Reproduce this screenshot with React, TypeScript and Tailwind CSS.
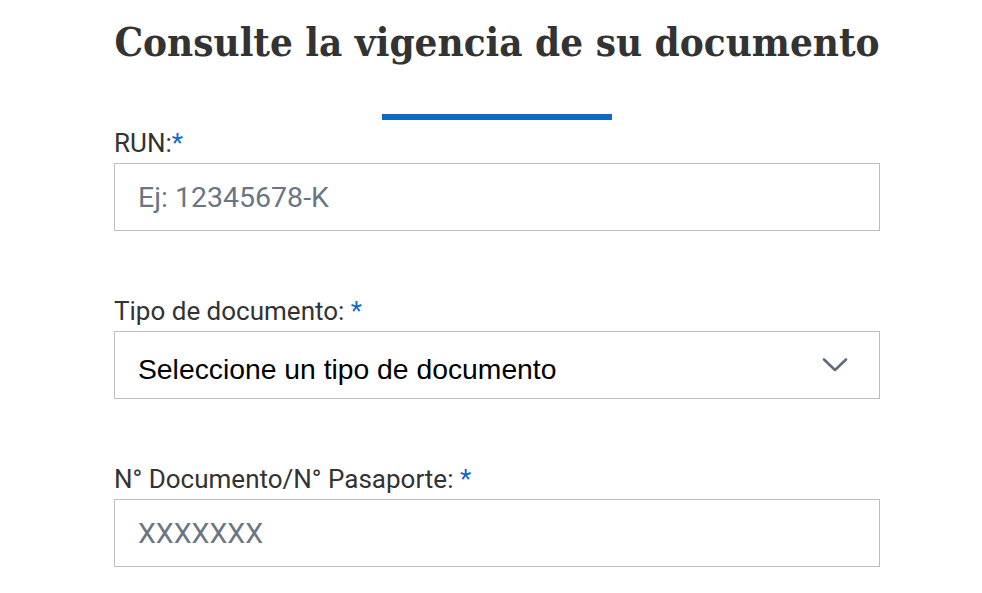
import React from "react";

const labelCls =
  "block text-[26px] leading-[30px] text-[#333333] font-['Roboto',sans-serif]";

function Field({
  label,
  children,
  gapBefore,
}: {
  label: React.ReactNode;
  children: React.ReactNode;
  gapBefore: string;
}) {
  return (
    <div className={gapBefore}>
      <label className={labelCls}>{label}</label>
      <div className="mt-[5px]">{children}</div>
    </div>
  );
}

const Star = () => <span className="text-[#0f69c4]">*</span>;

export default function App() {
  return (
    <div className="w-[982px] h-[593px] bg-white overflow-hidden">
      <div className="ml-[114px] w-[766px] pt-[14px]">
        <h1 className="text-center text-[40px] leading-[56px] font-bold text-[#333333] font-['DejaVu_Serif_Condensed','DejaVu_Serif',serif] [font-stretch:condensed] whitespace-nowrap">
          Consulte la vigencia de su documento
        </h1>
        <div className="flex justify-center mt-[44px]">
          <div className="w-[230px] h-[6px] bg-[#0f69c4]" />
        </div>
        <Field
          gapBefore="mt-[8px]"
          label={
            <>
              RUN:<Star />
            </>
          }
        >
          <input
            placeholder="Ej: 12345678-K"
            className="w-full h-[68px] border border-[#bdbdbd] px-[23px] text-[28.5px] font-['Roboto',sans-serif] placeholder:text-[#6b7684] outline-none"
          />
        </Field>
        <Field
          gapBefore="mt-[65px]"
          label={
            <>
              Tipo de documento: <Star />
            </>
          }
        >
          <div className="w-full h-[68px] border border-[#bdbdbd] pl-[23px] pr-[31px] flex items-center justify-between">
            <span className="text-[28.3px] text-black font-['Liberation_Sans',sans-serif] pt-[8px]">
              Seleccione un tipo de documento
            </span>
            <svg width="26" height="16" viewBox="0 0 26 16" fill="none">
              <path
                d="M2 2.5 L13 13 L24 2.5"
                stroke="#5f6b7a"
                strokeWidth="2.6"
                strokeLinecap="round"
                strokeLinejoin="round"
              />
            </svg>
          </div>
        </Field>
        <Field
          gapBefore="mt-[65px]"
          label={
            <>
              N° Documento/N° Pasaporte: <Star />
            </>
          }
        >
          <input
            placeholder="XXXXXXX"
            className="w-full h-[68px] border border-[#bdbdbd] px-[23px] text-[28.5px] font-['Roboto',sans-serif] placeholder:text-[#6b7684] outline-none"
          />
        </Field>
      </div>
    </div>
  );
}
